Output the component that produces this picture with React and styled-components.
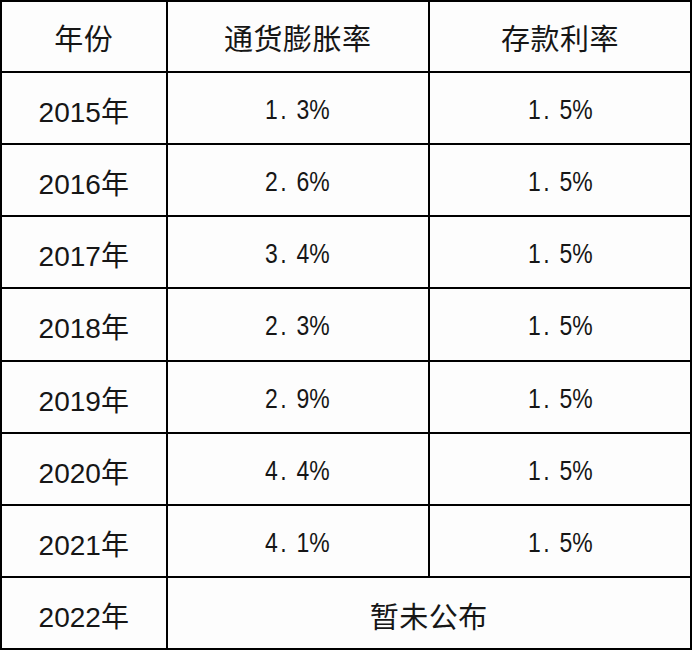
import React from "react";
import styled, { createGlobalStyle } from "styled-components";

const GlobalStyle = createGlobalStyle`
  html, body {
    margin: 0;
    padding: 0;
    background: #fff;
  }
`;

const Grid = styled.div`
  box-sizing: border-box;
  width: 692px;
  height: 650px;
  display: grid;
  grid-template-columns: 165.5px 262.5px 1fr;
  grid-template-rows: 71px repeat(8, 1fr);
  border-top: 2px solid #000;
  border-left: 2px solid #000;
  background: #fdfdfd;
  color: #161616;
`;

const Cell = styled.div`
  box-sizing: border-box;
  border-right: 2px solid #000;
  border-bottom: 2px solid #000;
  display: flex;
  align-items: center;
  justify-content: center;
  padding-top: ${({ $head }) => ($head ? "1px" : "4px")};
  grid-column: ${({ $span }) => ($span ? `span ${$span}` : "auto")};
  font-family: "Liberation Sans", "Noto Sans CJK SC", sans-serif;
  font-size: ${({ $cjk }) => ($cjk ? "29px" : "28px")};
  letter-spacing: ${({ $cjk }) => ($cjk ? "0.5px" : "0")};
  white-space: nowrap;
`;

const Rate = styled.span`
  display: inline-block;
  transform: scaleX(0.82);
`;

const Dot = styled.span`
  margin: 0 12px 0 3px;
`;

const rows = [
  ["2015年", "1.3%", "1.5%"],
  ["2016年", "2.6%", "1.5%"],
  ["2017年", "3.4%", "1.5%"],
  ["2018年", "2.3%", "1.5%"],
  ["2019年", "2.9%", "1.5%"],
  ["2020年", "4.4%", "1.5%"],
  ["2021年", "4.1%", "1.5%"],
];

const RateValue = ({ value }) => {
  const [whole, frac] = value.split(".");
  return (
    <Rate>
      {whole}
      <Dot>.</Dot>
      {frac}
    </Rate>
  );
};

export default function App() {
  return (
    <>
      <GlobalStyle />
      <Grid>
        <Cell $head $cjk>年份</Cell>
        <Cell $head $cjk>通货膨胀率</Cell>
        <Cell $head $cjk>存款利率</Cell>
        {rows.map(([year, inflation, deposit]) => (
          <React.Fragment key={year}>
            <Cell>{year}</Cell>
            <Cell>
              <RateValue value={inflation} />
            </Cell>
            <Cell>
              <RateValue value={deposit} />
            </Cell>
          </React.Fragment>
        ))}
        <Cell>2022年</Cell>
        <Cell $span={2} $cjk>暂未公布</Cell>
      </Grid>
    </>
  );
}
